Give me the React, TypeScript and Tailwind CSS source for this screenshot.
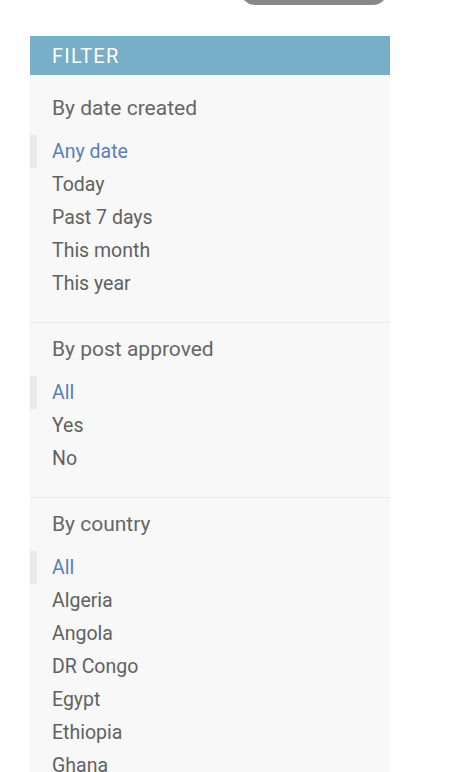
const sections = [
  { title: 'By date created', items: ['Any date', 'Today', 'Past 7 days', 'This month', 'This year'] },
  { title: 'By post approved', items: ['All', 'Yes', 'No'] },
  {
    title: 'By country',
    items: ['All', 'Algeria', 'Angola', 'DR Congo', 'Egypt', 'Ethiopia', 'Ghana', 'Kenya', 'Morocco', 'Nigeria'],
  },
]

export default function App() {
  return (
    <div className="min-h-[772px] bg-white font-['Roboto',sans-serif]">
      <div className="flex justify-end pr-[62px]">
        <div className="-mt-[26px] h-[31px] w-[148px] rounded-full bg-[#888888]" />
      </div>
      <div className="ml-[30px] mt-[31px] w-[360px] bg-[#f8f8f8]">
        <h2 className="flex h-[39px] items-center bg-[#79aec8] pl-[22px] text-[20px] font-normal uppercase tracking-[1.2px] text-white">
          Filter
        </h2>
        {sections.map((s, i) => (
          <div key={s.title} className={`border-b border-[#eaeaea] pb-[22px] ${i === 0 ? 'pt-[21px]' : 'pt-[14px]'}`}>
            <h3 className="pl-[22px] text-[21px] leading-[24px] text-[#666666]">{s.title}</h3>
            <ul className="mt-[15px]">
              {s.items.map((it, j) => (
                <li
                  key={it}
                  className={
                    j === 0
                      ? 'flex h-[33px] items-center border-l-[7px] border-[#eaeaea] pl-[15px] text-[19.5px] text-[#5b80b2]'
                      : 'flex h-[33px] items-center pl-[22px] text-[19.5px] text-[#616161]'
                  }
                >
                  {it}
                </li>
              ))}
            </ul>
          </div>
        ))}
      </div>
    </div>
  )
}
